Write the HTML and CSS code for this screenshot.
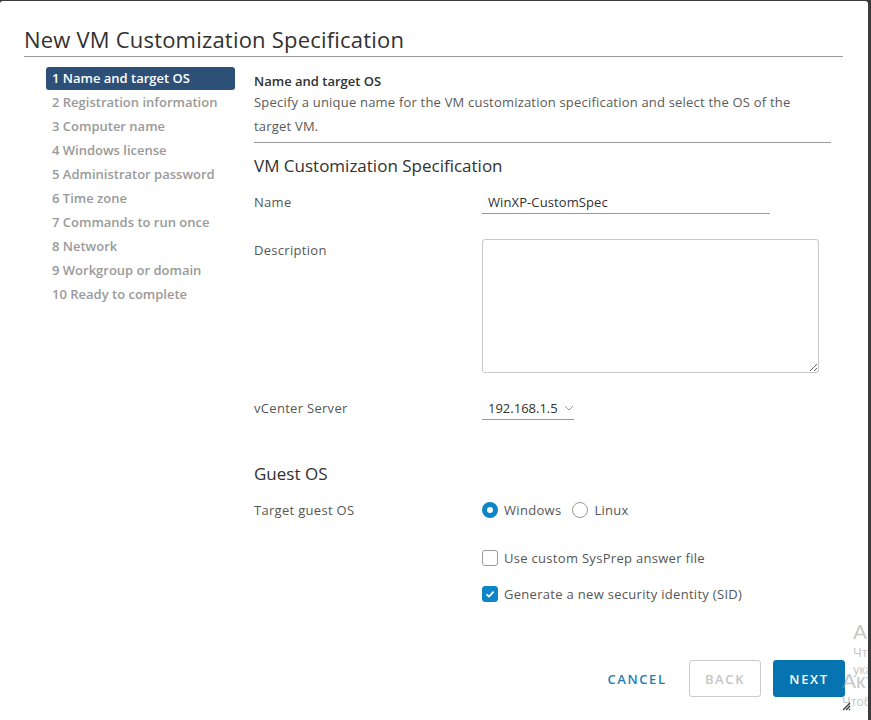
FILE: index.html
```html
<html>
<head>
  <meta charset="UTF-8" />
  <link rel="stylesheet" href="styles.css">
</head>
<body>
<div class="modal">
  <h3 class="modal-title">New VM Customization Specification</h3>

  <div class="modal-body">
    <ul class="steps">
      <li class="active">1 Name and target OS</li>
      <li>2 Registration information</li>
      <li>3 Computer name</li>
      <li>4 Windows license</li>
      <li>5 Administrator password</li>
      <li>6 Time zone</li>
      <li>7 Commands to run once</li>
      <li>8 Network</li>
      <li>9 Workgroup or domain</li>
      <li>10 Ready to complete</li>
    </ul>

    <div class="page">
      <div class="page-head">
        <div class="page-title">Name and target OS</div>
        <div class="page-desc">Specify a unique name for the VM customization specification and select the OS of the target VM.</div>
      </div>

      <h4 class="section">VM Customization Specification</h4>

      <div class="row row-name">
        <label>Name</label>
        <div class="field"><input class="text-input" type="text" value="WinXP-CustomSpec"></div>
      </div>

      <div class="row row-desc">
        <label>Description</label>
        <div class="field"><textarea class="textarea"></textarea></div>
      </div>

      <div class="row row-vc">
        <label>vCenter Server</label>
        <div class="field">
          <div class="select">192.168.1.5
            <svg class="chev" width="10" height="6" viewBox="0 0 10 6"><path d="M1 1 L5 5 L9 1" fill="none" stroke="#9a9a9a" stroke-width="1"/></svg>
          </div>
        </div>
      </div>

      <h4 class="section section-guest">Guest OS</h4>

      <div class="row row-os">
        <label>Target guest OS</label>
        <div class="field radios">
          <span class="radio checked"></span><span class="opt">Windows</span>
          <span class="radio"></span><span class="opt">Linux</span>
        </div>
      </div>

      <div class="row row-check1">
        <label></label>
        <div class="field"><span class="checkbox"></span><span class="opt">Use custom SysPrep answer file</span></div>
      </div>

      <div class="row row-check2">
        <label></label>
        <div class="field"><span class="checkbox checked"><svg width="16" height="16" viewBox="0 0 16 16"><path d="M4.5 8.3 L7 10.6 L11.6 5.6" fill="none" stroke="#fff" stroke-width="1.8"/></svg></span><span class="opt">Generate a new security identity (SID)</span></div>
      </div>
    </div>
  </div>

  <div class="modal-footer">
    <button class="btn btn-link">CANCEL</button>
    <button class="btn btn-outline" disabled>BACK</button>
    <button class="btn btn-primary">NEXT</button>
  </div>

  <div class="watermark wm1">
    <div class="wm-big">Активация Windows</div>
    <div class="wm-small">Чтобы активировать Windows,</div>
    <div class="wm-small">укажите ключ</div>
  </div>
  <div class="watermark wm2">
    <div class="wm-big">Активация Windows</div>
    <div class="wm-small">Чтобы активировать Windows,</div>
  </div>

  <svg class="grip" width="9" height="9" viewBox="0 0 9 9"><path d="M8 1 L1 8 M8 4 L4 8 M8 7 L7 8" stroke="#333" stroke-width="1.2"/></svg>
</div>
</body>
</html>
```

FILE: styles.css
```css
html, body {
    margin: 0;
    height: 100%;
    overflow: hidden;
}

body {
    background: #3a3a3a;
    font-family: "Open Sans", "Liberation Sans", sans-serif;
    color: #565656;
    font-size: 13px;
}

.modal {
    position: relative;
    width: 868px;
    height: 740px;
    margin-top: 1px;
    background: #fff;
    border-radius: 3px;
    box-sizing: border-box;
    padding: 0 25px 0 24px;
    overflow: hidden;
}

.modal-title {
    margin: 0;
    padding-top: 23px;
    height: 32px;
    font-size: 22px;
    font-weight: 400;
    line-height: 30px;
    color: #313131;
    border-bottom: 1px solid #9a9a9a;
    letter-spacing: 0.2px;
}

.modal-body {
    display: flex;
    margin-top: 10px;
}

.steps {
    list-style: none;
    margin: 0 0 0 22px;
    padding: 0;
    width: 189px;
    flex: none;
}

.steps li {
    height: 24px;
    line-height: 24px;
    padding-left: 6px;
    font-weight: 600;
    color: #9a9a9a;
    border-radius: 3px;
}

.steps li.active {
    background: #2d5079;
    color: #fff;
    height: 23px;
    line-height: 23px;
}

.page {
    margin-left: 19px;
    width: 577px;
}

.page-head {
    padding-top: 5px;
    padding-bottom: 4px;
    border-bottom: 1px solid #9a9a9a;
}

.page-title {
    line-height: 18px;
    font-weight: 600;
    color: #313131;
}

.page-desc {
    line-height: 24px;
    color: #5a5a5a;
    letter-spacing: 0.2px;
    max-width: 560px;
}

.section {
    margin: 11px 0 0;
    font-size: 17px;
    font-weight: 400;
    line-height: 24px;
    color: #313131;
}

.section-guest {
    margin-top: 42px;
}

.row {
    display: flex;
    align-items: flex-start;
    line-height: 24px;
    letter-spacing: 0.3px;
}

.row label {
    width: 228px;
    flex: none;
    color: #565656;
}

.row-name { margin-top: 12px; }
.row-desc { margin-top: 24px; }
.row-vc { margin-top: 23px; }
.row-os { margin-top: 12px; }
.row-check1 { margin-top: 24px; }
.row-check2 { margin-top: 12px; }

.text-input {
    width: 288px;
    height: 24px;
    box-sizing: border-box;
    border: none;
    border-bottom: 1px solid #9a9a9a;
    padding: 0 6px;
    font: inherit;
    letter-spacing: 0.1px;
    color: #313131;
    outline: none;
}

.textarea {
    display: block;
    margin-top: 1px;
    width: 337px;
    height: 134px;
    box-sizing: border-box;
    border: 1px solid #c8c8c8;
    border-radius: 3px;
    font: inherit;
    outline: none;
}

.select {
    width: 92px;
    height: 24px;
    box-sizing: border-box;
    border-bottom: 1px solid #9a9a9a;
    padding-left: 6px;
    color: #313131;
    letter-spacing: 0;
    display: flex;
    align-items: center;
}

.chev {
    margin-left: 6px;
}

.field {
    display: flex;
    align-items: center;
    height: 24px;
}

.row-desc .field {
    height: auto;
}

.opt {
    color: #565656;
    margin-left: 6px;
}

.radio {
    width: 16px;
    height: 16px;
    box-sizing: border-box;
    border: 1px solid #9a9a9a;
    border-radius: 50%;
    flex: none;
}

.radios .opt + .radio {
    margin-left: 11px;
}

.radio.checked {
    border: 5px solid #0d85c6;
    background: #fff;
}

.checkbox {
    width: 16px;
    height: 16px;
    box-sizing: border-box;
    border: 1px solid #9a9a9a;
    border-radius: 3px;
    flex: none;
}

.checkbox.checked {
    background: #0d85c6;
    border-color: #0d85c6;
    position: relative;
}

.checkbox.checked svg {
    position: absolute;
    left: -1px;
    top: -1px;
}

.modal-footer {
    position: absolute;
    left: 0;
    right: 23px;
    top: 659px;
    display: flex;
    justify-content: flex-end;
    align-items: center;
}

.btn {
    height: 37px;
    box-sizing: border-box;
    font-family: "Open Sans", "Liberation Sans", sans-serif;
    font-size: 13px;
    font-weight: 600;
    letter-spacing: 1.6px;
    border-radius: 3px;
    background: none;
    border: 1px solid transparent;
    padding: 0;
}

.btn-link {
    color: #1f7fb3;
    width: 72px;
    margin-right: 16px;
}

.btn-outline {
    width: 72px;
    border-color: #cccccc;
    color: #c6c6c6;
    margin-right: 12px;
}

.btn-primary {
    width: 72px;
    background: #0574b0;
    border-color: #0574b0;
    color: #fff;
}

.watermark {
    position: absolute;
    color: rgba(150, 150, 150, 0.55);
    white-space: nowrap;
    font-family: "Liberation Sans", sans-serif;
}

.wm-big {
    font-size: 21px;
    line-height: 24px;
}

.wm-small {
    font-size: 13px;
    line-height: 17px;
}

.wm1 {
    left: 853px;
    top: 619px;
}

.wm2 {
    left: 842px;
    top: 668px;
}

.grip {
    position: absolute;
    right: 17px;
    top: 701px;
}
```
